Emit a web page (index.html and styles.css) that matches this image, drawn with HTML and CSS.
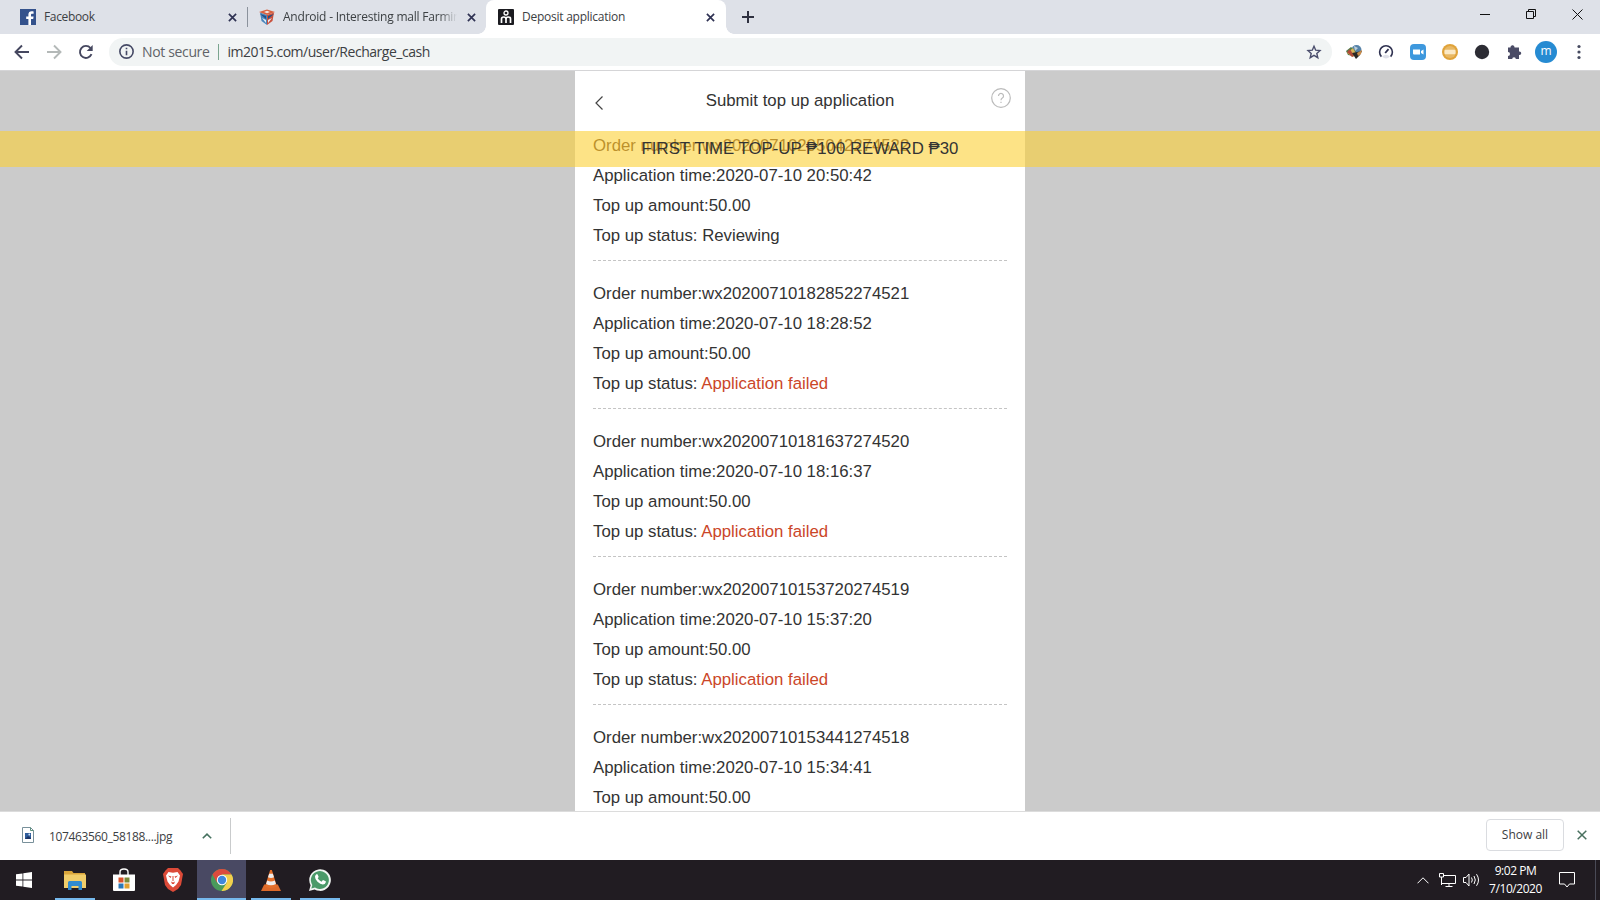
FILE: index.html
```html
<!DOCTYPE html>
<html lang="en">
<head>
    <meta charset="UTF-8">
    <meta name="viewport" content="width=device-width, initial-scale=1.0">
    <title>Deposit application</title>
    <link rel="stylesheet" href="styles.css">
</head>
<body>

<div class="screen">
    <!-- Tabs -->
    <div class="tabstrip">
        <div class="tab tab-first">
            <svg class="favicon" viewBox="0 0 16 16"><rect width="16" height="16" fill="#34528c"/><path d="M11 16V10h2.200l.4-2.400H11V6c0-.8.3-1.200 1.200-1.200h1.400V2.500c-.4-.1-1.200-.2-1.900-.2-2.100 0-3.300 1.200-3.300 3.300v2H6.200V10h2.200v6z" fill="#fff"/></svg>
            <span class="tab-title"><span class="t-facebook">Facebook</span></span>
            <svg class="tab-close" viewBox="0 0 8 8"><path d="M.8.8l6.400 6.400M7.200.8L.8 7.200"/></svg>
        </div>
        <div class="tab tab-second">
            <svg class="favicon" viewBox="0 0 16 16"><path d="M1 3.500L8 6v10l-5.500-4z" fill="#4a86bd"/><path d="M15 3.500L8 6v10l5.500-4z" fill="#c9503c"/><path d="M0 3l8-2.500L16 3 8 6z" fill="#d9603f"/><path d="M5 3l3-1.200L11 3 8 4.200z" fill="#f3e6e0"/><path d="M1 5l6 5V7zM15 5l-6 5V7z" fill="#234f86"/><path d="M3 9l4 2v3zM13 9l-4 2v3z" fill="#e4edf5"/></svg>
            <span class="tab-title fade"><span class="t-android">Android - Interesting mall Farming</span></span>
            <svg class="tab-close" viewBox="0 0 8 8"><path d="M.8.8l6.400 6.400M7.200.8L.8 7.200"/></svg>
        </div>
        <div class="tab tab-active">
            <svg class="favicon" viewBox="0 0 16 16"><rect width="16" height="16" rx="1" fill="#1b1b20"/><circle cx="8" cy="4" r="2" fill="none" stroke="#fff" stroke-width="1.300"/><path d="M3.500 14V10q0-2 2.200-2T8 10v4M8 10q0-2 2.300-2t2.200 2v4" fill="none" stroke="#fff" stroke-width="1.700"/></svg>
            <span class="tab-title"><span class="t-deposit">Deposit application</span></span>
            <svg class="tab-close" viewBox="0 0 8 8"><path d="M.8.8l6.400 6.400M7.200.8L.8 7.200"/></svg>
        </div>
        <svg class="new-tab" viewBox="0 0 12 12"><path d="M6 0v12M0 6h12"/></svg>
        <div class="window-buttons">
            <svg width="10" height="10" viewBox="0 0 10 10"><path d="M0 5.500h10"/></svg>
            <svg width="10" height="10" viewBox="0 0 10 10"><path d="M.5 2.500h7v7h-7zM2.500 2.500v-2h7v7h-2"/></svg>
            <svg width="11" height="11" viewBox="0 0 11 11"><path d="M.5.5l10 10M10.500.5l-10 10"/></svg>
        </div>
    </div>

    <!-- Address bar -->
    <div class="toolbar">
        <svg class="nav" viewBox="0 0 16 16"><path d="M15 8H2M8 1.500L1.500 8 8 14.500"/></svg>
        <svg class="nav disabled" viewBox="0 0 16 16"><path d="M1 8h13M8 1.500L14.500 8 8 14.500"/></svg>
        <svg class="nav" viewBox="0 0 16 16"><path d="M13.500 10.200A6 6 0 1 1 12.500 4"/><path d="M14.700 1v6H8.700z" class="solid"/></svg>
        <div class="omnibox">
            <svg class="info" viewBox="0 0 14 14"><circle cx="7" cy="7" r="6.200"/><path d="M7 6.200v4.300M7 3.500v1.500"/></svg>
            <span class="secure">Not secure</span>
            <span class="divider"></span>
            <span class="url">im2015.com/user/Recharge_cash</span>
            <svg class="star" viewBox="0 0 16 16"><path d="M8 2.200l1.700 4 4.300.4-3.200 2.900 1 4.200L8 11.400l-3.800 2.300 1-4.200L2 6.600l4.300-.4z"/></svg>
        </div>
        <div class="extensions">
            <svg viewBox="0 0 16 16"><circle cx="10.500" cy="6" r="5" fill="#5682a8"/><path d="M0 7l5-4 5 4-3 5-5-1z" fill="#4e7c4a"/><path d="M1 9l6-5 3 6-3 3z" fill="#d7b45a"/><path d="M1 8l3-3 4 7-2 1z" fill="#b14a38"/><path d="M6 9l10-2-2 4-4 4z" fill="#2a2724"/><path d="M8 2l4 2-3 3z" fill="#b9cddb"/><path d="M11 9l5-3-1 4-3 2z" fill="#c98c4a"/></svg>
            <svg viewBox="0 0 16 16"><path d="M3.400 12.600a6.400 6.400 0 1 1 9.200 0" fill="none" stroke="#2e3150" stroke-width="1.600"/><path d="M4 12.500q4-3.500 8 0-4 4-8 0z" fill="#dfe0e8"/><path d="M7.200 9L10.500 5.200" stroke="#2e3150" stroke-width="1.800"/></svg>
            <svg viewBox="0 0 16 16"><rect width="16" height="16" rx="4" fill="#3e98dd"/><path d="M3 5.500h7v5H4q-1 0-1-1zM11 7l2.500-1.500v5L11 9z" fill="#fff"/></svg>
            <svg viewBox="0 0 16 16"><circle cx="8" cy="8" r="8" fill="#e0a33a"/><circle cx="8" cy="8" r="6" fill="#e8b865"/><rect x="2.500" y="5.800" width="11" height="4.400" rx="1" fill="#fbe9c5"/></svg>
            <svg viewBox="0 0 16 16"><circle cx="8" cy="8" r="7.200" fill="#2c2c34"/></svg>
            <svg viewBox="0 0 16 16"><path d="M2 3.500h2.500a2 2 0 1 1 4-.5v.5H13v4h.5a1.700 1.700 0 0 1 0 3.500H13v4H9.800a1.800 1.800 0 0 0-3.600 0H2v-3a1.900 1.900 0 0 0 0-4z" fill="#4b4c66"/></svg>
        </div>
        <span class="avatar">m</span>
        <svg class="menu" viewBox="0 0 4 16"><circle cx="2" cy="2.500" r="1.600"/><circle cx="2" cy="8" r="1.600"/><circle cx="2" cy="13.500" r="1.600"/></svg>
    </div>

    <!-- Page -->
    <div class="page">
        <div class="app">
            <div class="app-header">
                <svg class="back" viewBox="0 0 8 14"><path d="M7.500.5L1 7l6.500 6.500"/></svg>
                <h1>Submit top up application</h1>
                <svg class="help" viewBox="0 0 20 20"><circle cx="10" cy="10" r="9.300"/><path d="M7.500 8a2.500 2.500 0 1 1 3.800 2.100Q10 10.900 10 12.300M10 13.800v1.200"/></svg>
            </div>
            <div class="records">
                <div class="record">
                    <p>Order number:wx20200710205042274522</p>
                    <p>Application time:2020-07-10 20:50:42</p>
                    <p>Top up amount:50.00</p>
                    <p>Top up status: Reviewing</p>
                </div>
                <div class="record">
                    <p>Order number:wx20200710182852274521</p>
                    <p>Application time:2020-07-10 18:28:52</p>
                    <p>Top up amount:50.00</p>
                    <p>Top up status: <span class="failed">Application failed</span></p>
                </div>
                <div class="record">
                    <p>Order number:wx20200710181637274520</p>
                    <p>Application time:2020-07-10 18:16:37</p>
                    <p>Top up amount:50.00</p>
                    <p>Top up status: <span class="failed">Application failed</span></p>
                </div>
                <div class="record">
                    <p>Order number:wx20200710153720274519</p>
                    <p>Application time:2020-07-10 15:37:20</p>
                    <p>Top up amount:50.00</p>
                    <p>Top up status: <span class="failed">Application failed</span></p>
                </div>
                <div class="record">
                    <p>Order number:wx20200710153441274518</p>
                    <p>Application time:2020-07-10 15:34:41</p>
                    <p>Top up amount:50.00</p>
                </div>
            </div>
        </div>
        <div class="notice"><span>FIRST TIME TOP-UP ₱100 REWARD ₱30</span></div>
    </div>

    <!-- Downloads -->
    <div class="downloads">
        <div class="download-item">
            <svg class="file-icon" viewBox="0 0 12 16"><path d="M.5.5h8l3 3v12H.5z" fill="#fff" stroke="#78909a"/><path d="M8.500.5v3h3" fill="none" stroke="#5d917e"/><rect x="3" y="6" width="6" height="6" fill="#2f5d9c"/><path d="M3 12l3-3 3 2v1z" fill="#1d3566"/><circle cx="7.300" cy="7.500" r=".9" fill="#cfe2f5"/></svg>
            <span class="file-name">107463560_58188....jpg</span>
            <svg class="chevron" viewBox="0 0 10 6"><path d="M.8 5.300L5 1.200l4.200 4.100"/></svg>
        </div>
        <span class="show-all">Show all</span>
        <svg class="close-bar" viewBox="0 0 10 10"><path d="M.7.7l8.600 8.600M9.300.7L.7 9.300"/></svg>
    </div>

    <!-- Taskbar -->
    <div class="taskbar">
        <div class="task start"><svg width="16" height="16" viewBox="0 0 16 16"><path d="M0 2.300L6.500 1.400v6.100H0zM7.300 1.300L16 0v7.500H7.300zM0 8.400h6.500v6.200L0 13.700zM7.300 8.400H16V16l-8.700-1.300z" fill="#fff"/></svg></div>
        <div class="task running"><svg width="22" height="20" viewBox="0 0 22 20"><path d="M0 1h8l1.500 2H21v3H0z" fill="#d9a53a"/><path d="M0 4.500h22V18H0z" fill="#f0cd6a"/><path d="M4 12.500q0-1.500 1.500-1.500h11q1.500 0 1.500 1.500V20h-3.500v-4h-7v4H4z" fill="#2f8bd0"/></svg></div>
        <div class="task"><svg width="24" height="24" viewBox="0 0 24 24"><path d="M8 7V4q0-3 4-3t4 3v3" fill="none" stroke="#fff" stroke-width="1.400"/><path d="M1 6.500h22V22q0 1-1 1H2q-1 0-1-1z" fill="#fff"/><path d="M6.500 9.500h5v5h-5z" fill="#d9532c"/><path d="M12.500 9.500h5v5h-5z" fill="#7a8a3a"/><path d="M6.500 15.500h5v5h-5z" fill="#2b78b8"/><path d="M12.500 15.500h5v5h-5z" fill="#e2a030"/></svg></div>
        <div class="task"><svg width="20" height="24" viewBox="0 0 20 24"><path d="M5 0h10l2.500 2.500L20 6l-2 11-3 4-5 3-5-3-3-4L0 6l2.500-3.500z" fill="#dc4a38"/><path d="M5.500 4L10 4.800 14.500 4 17 7.500l-1.500 6L13 17l-3 2.500L7 17l-2.500-3.500L3 7.500z" fill="#fff"/><path d="M5 7.500l3.500 1-1 1.500zM15 7.500l-3.500 1 1 1.500zM8 13.500l2 1 2-1-1 2.500H9zM9.500 8h1v5h-1z" fill="#dc4a38"/></svg></div>
        <div class="task running current"><svg width="22" height="22" viewBox="0 0 22 22"><circle cx="11" cy="11" r="11" fill="#4a9a5b"/><path d="M1.500 5.500A11 11 0 0 1 20.500 5.500H11L6.200 13.800z" fill="#dc4b3e"/><path d="M20.500 5.500A11 11 0 0 1 10.500 22l5.300-8.200L11 5.500z" fill="#f2cf4d"/><circle cx="11" cy="11" r="5.200" fill="#fff"/><circle cx="11" cy="11" r="4.200" fill="#3f87dc"/></svg></div>
        <div class="task running vlc"><svg width="20" height="23" viewBox="0 0 22 23"><path d="M3.500 16h15L22 23H0z" fill="#dd6a2a"/><path d="M10 0h2l5.500 18q-6.500 4-13 0z" fill="#e5702b"/><path d="M9 4h4l1.300 4q-3.300 1.500-6.600 0zM6.800 11.500q4.200 2 8.400 0l1.200 3.800q-5.400 2.700-10.800 0z" fill="#eee"/></svg></div>
        <div class="task running"><svg width="22" height="22" viewBox="0 0 22 22"><path d="M0 22l1.600-5.700A10.800 10.800 0 1 1 5.600 20.400z" fill="#f1f5f2"/><path d="M2.300 19.600l1-3.700A9 9 0 1 1 6 18.600z" fill="#4b9a69"/><path d="M7.200 5.500q.7-.8 1.400 0l1 2.300q0 .6-.9 1.500 1.300 2.500 3.800 3.400l1.200-1.400q.4-.3.800-.1l2.200 1.100q.3.200.1 1-.6 2.200-3 2.200-2.500-.2-5.300-2.800-2.700-2.800-2.500-4.900.1-1.400 1.200-2.300z" fill="#fff"/></svg></div>
        <div class="tray">
            <svg class="tray-up" width="12" height="7" viewBox="0 0 12 7"><path d="M.5 6.300L6 .8l5.500 5.500"/></svg>
            <svg class="tray-net" width="17" height="14" viewBox="0 0 17 14"><path d="M5 2.500h11.500v8H3M10 10.500v3M6.500 13.500h7M.5.500h4v3.500h-4zM2.500 4v8"/></svg>
            <svg class="tray-sound" width="17" height="14" viewBox="0 0 17 14"><path d="M.5 4.500H3l3-3.500v12L3 9.500H.5zM8.500 4.500q1.600 2.500 0 5M11 3q2.600 4 0 8M13.500 1.200q4 5.800 0 11.600"/></svg>
            <div class="clock"><span>9:02 PM</span><span>7/10/2020</span></div>
            <svg width="16" height="16" viewBox="0 0 16 16"><path d="M.5.500h15v11.500H10.500L8 15l-2.500-3H.5z"/></svg>
        </div>
    </div>
</div>

</body>
</html>
```
FILE: styles.css
```css
* {
    box-sizing: border-box;
}
body {
    margin: 0;
    overflow: hidden;
    font-family: "Open Sans", "Noto Sans", sans-serif;
    font-size: 12px;
    color: #3c4043;
}
svg {
    display: block;
    flex: none;
}
.screen {
    display: flex;
    flex-direction: column;
    width: 1600px;
    height: 900px;
}

/* tabs */
.tabstrip {
    display: flex;
    align-items: center;
    height: 34px;
    background-color: #dee1e8;
}
.tab {
    display: flex;
    align-items: center;
    height: 34px;
}
.tab-first {
    width: 248px;
    padding: 0 11px 0 20px;
    background: linear-gradient(#8b929c, #8b929c) right 7px / 1px 20px no-repeat;
}
.tab-second {
    width: 238px;
    padding: 0 10px 0 11px;
}
.tab-active {
    width: 240px;
    padding: 0 11px 0 12px;
    border-radius: 8px 8px 0 0;
    background-color: #fff;
    position: relative;
}
.tab-active::before,
.tab-active::after {
    content: "";
    position: absolute;
    bottom: 0;
    width: 8px;
    height: 8px;
}
.tab-active::before {
    left: -8px;
    background: radial-gradient(circle at 0 0, transparent 7.5px, #fff 8px);
}
.tab-active::after {
    right: -8px;
    background: radial-gradient(circle at 100% 0, transparent 7.5px, #fff 8px);
}
.favicon {
    width: 16px;
    height: 16px;
}
.tab-title {
    flex: 1;
    min-width: 0;
    margin: -1px 8px 0;
    overflow: hidden;
    white-space: nowrap;
}
.fade {
    margin-right: 10px;
    -webkit-mask-image: linear-gradient(to right, #000 90%, transparent);
    mask-image: linear-gradient(to right, #000 90%, transparent);
}
.t-facebook {
    letter-spacing: -0.35px;
}
.t-android {
    letter-spacing: -0.22px;
}
.t-deposit {
    letter-spacing: -0.25px;
}
.tab-close {
    width: 9px;
    height: 9px;
    stroke: #2f3253;
    stroke-width: 1.5;
}
.new-tab {
    width: 12px;
    height: 12px;
    margin-left: 16px;
    stroke: #2f3140;
    stroke-width: 2;
}
.window-buttons {
    display: flex;
    align-items: center;
    gap: 36px;
    margin: -6px 17px 0 auto;
    fill: none;
    stroke: #111;
}

/* address bar */
.toolbar {
    display: flex;
    align-items: center;
    height: 37px;
    padding: 0 19px 1px 14px;
    border-bottom: 1px solid #d5d5d7;
    background-color: #fff;
}
.nav {
    width: 16px;
    height: 16px;
    margin-right: 16px;
    fill: none;
    stroke: #45475f;
    stroke-width: 1.9;
}
.nav .solid {
    fill: #45475f;
    stroke: none;
}
.disabled {
    stroke: #b4b9b8;
}
.omnibox {
    display: flex;
    align-items: center;
    width: 1223px;
    height: 28px;
    margin-left: -1px;
    padding: 0 10px 0 10px;
    border-radius: 14px;
    background-color: #f1f4f4;
    font-size: 14px;
}
.info {
    width: 15px;
    height: 15px;
    fill: none;
    stroke: #464a66;
    stroke-width: 1.5;
}
.secure {
    margin-left: 8px;
    letter-spacing: -0.35px;
    color: #5f6368;
}
.divider {
    width: 1px;
    height: 16px;
    margin: 0 9px 0 8px;
    background-color: #7aa58f;
}
.url {
    letter-spacing: -0.47px;
}
.star {
    width: 16px;
    height: 16px;
    margin-left: auto;
    fill: none;
    stroke: #4a4d6c;
    stroke-width: 1.4;
}
.extensions {
    display: flex;
    gap: 16px;
    margin-left: 14px;
}
.extensions svg {
    width: 16px;
    height: 16px;
}
.avatar {
    width: 22px;
    height: 22px;
    margin-left: 13px;
    border-radius: 50%;
    background-color: #268bd2;
    color: #fff;
    line-height: 20px;
    text-align: center;
}
.menu {
    width: 4px;
    height: 16px;
    margin-left: auto;
    fill: #464a60;
}

/* page */
.page {
    flex: 1;
    min-height: 0;
    position: relative;
    overflow: hidden;
    background-color: #cbcbcb;
    font-family: "Liberation Sans", Arial, sans-serif;
    font-size: 16.8px;
    color: #333;
}
.app {
    width: 450px;
    height: 100%;
    margin: 0 auto;
    background-color: #fff;
}
.app-header {
    display: flex;
    align-items: center;
    justify-content: space-between;
    height: 60px;
    padding: 0 14px 1px 20px;
}
.app-header h1 {
    margin: 0 0 0 6px;
    font-size: 16.8px;
    font-weight: normal;
}
.back {
    width: 8px;
    height: 14px;
    margin-top: 5px;
    fill: none;
    stroke: #444;
    stroke-width: 1.2;
}
.help {
    width: 20px;
    height: 20px;
    margin-top: -5px;
    fill: none;
    stroke: #bbb;
    stroke-width: 1.2;
}
.records {
    padding: 0 18px;
}
.record {
    height: 148px;
    padding-bottom: 9px;
    border-bottom: 1px dashed #c4c4c4;
}
.record + .record {
    padding-top: 18px;
}
.record:first-child {
    height: 130px;
}
.record p {
    margin: 0;
    line-height: 30px;
    white-space: nowrap;
}
.failed {
    color: #cb4628;
}
.notice {
    position: absolute;
    top: 60px;
    left: 0;
    width: 100%;
    background-color: rgba(252, 208, 54, 0.6);
    line-height: 36px;
    text-align: center;
}
/* the line that has scrolled under the notice */
.record:first-child p:first-child {
    color: #5c3020;
}

/* downloads */
.downloads {
    display: flex;
    align-items: center;
    height: 49px;
    padding: 0 13px 0 0;
    border-top: 1px solid #dcdcdc;
    background-color: #fff;
}
.download-item {
    display: flex;
    align-items: center;
    width: 231px;
    height: 36px;
    padding-left: 22px;
    border-right: 1px solid #c9cbcc;
}
.file-icon {
    width: 12px;
    height: 16px;
    margin-top: -2px;
}
.file-name {
    margin-left: 15px;
    letter-spacing: -0.35px;
}
.chevron {
    width: 10px;
    height: 6px;
    margin: 0 18px 0 auto;
    fill: none;
    stroke: #45715f;
    stroke-width: 1.6;
}
.show-all {
    width: 78px;
    height: 32px;
    margin: -3px 13px 0 auto;
    border: 1px solid #dadce0;
    border-radius: 4px;
    line-height: 29px;
    text-align: center;
}
.close-bar {
    width: 10px;
    height: 10px;
    margin-top: -2px;
    stroke: #49705f;
    stroke-width: 1.5;
}

/* taskbar */
.taskbar {
    display: flex;
    height: 40px;
    background-color: #211c22;
}
.task {
    display: flex;
    align-items: center;
    justify-content: center;
    width: 49px;
    height: 40px;
}
.start {
    width: 50px;
    padding-right: 2px;
}
.running {
    background: linear-gradient(#76b9ed, #76b9ed) center bottom / 40px 2px no-repeat;
}
.current {
    background-color: #494963;
    background-size: 100% 2px;
}
.tray {
    display: flex;
    align-items: center;
    margin: 0 4px 0 auto;
    padding-right: 20px;
    border-right: 1px solid #4a4a56;
    fill: none;
    stroke: #fff;
}
.tray-up {
    margin-right: 10px;
}
.tray-net {
    margin-right: 7px;
}
.clock {
    display: flex;
    flex-direction: column;
    align-items: center;
    width: 53px;
    margin: -1px 17px 0 9px;
    color: #fff;
    letter-spacing: -0.45px;
    line-height: 18px;
}
```
